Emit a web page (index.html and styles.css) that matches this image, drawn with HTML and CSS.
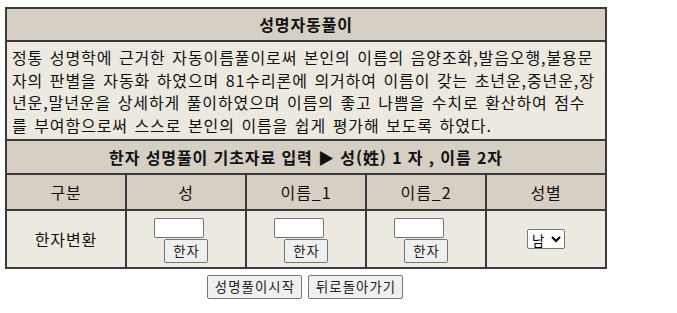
FILE: index.html
```html
<!DOCTYPE html>
<html lang="ko">
<head>
<meta charset="utf-8">
<title>성명자동풀이</title>
<link rel="stylesheet" href="styles.css">
</head>
<body>
<div class="page">
  <table class="name-table">
    <colgroup>
      <col class="col"><col class="col"><col class="col"><col class="col"><col class="col">
    </colgroup>
    <tr>
      <td class="title" colspan="5">성명자동풀이</td>
    </tr>
    <tr>
      <td class="desc" colspan="5">정통 성명학에 근거한 자동이름풀이로써 본인의 이름의 음양조화,발음오행,불용문<br>자의 판별을 자동화 하였으며 81수리론에 의거하여 이름이 갖는 초년운,중년운,장<br>년운,말년운을 상세하게 풀이하였으며 이름의 좋고 나쁨을 수치로 환산하여 점수<br>를 부여함으로써 스스로 본인의 이름을 쉽게 평가해 보도록 하였다.</td>
    </tr>
    <tr>
      <td class="subtitle" colspan="5">한자 성명풀이 기초자료 입력 ▶ 성(姓) 1 자 , 이름 2자</td>
    </tr>
    <tr>
      <td class="head">구분</td>
      <td class="head">성</td>
      <td class="head">이름_1</td>
      <td class="head">이름_2</td>
      <td class="head">성별</td>
    </tr>
    <tr>
      <td class="cell">한자변환</td>
      <td class="cell hanja-cell">
        <div class="hanja-group">
          <input class="hanja-input" type="text">
          <button class="btn hanja-btn" type="button">한자</button>
        </div>
      </td>
      <td class="cell hanja-cell">
        <div class="hanja-group">
          <input class="hanja-input" type="text">
          <button class="btn hanja-btn" type="button">한자</button>
        </div>
      </td>
      <td class="cell hanja-cell">
        <div class="hanja-group">
          <input class="hanja-input" type="text">
          <button class="btn hanja-btn" type="button">한자</button>
        </div>
      </td>
      <td class="cell">
        <select class="gender">
          <option>남</option>
          <option>여</option>
        </select>
      </td>
    </tr>
  </table>
  <div class="actions">
    <button class="btn action-btn" type="button">성명풀이시작</button>
    <button class="btn action-btn" type="button">뒤로돌아가기</button>
  </div>
</div>
</body>
</html>
```

FILE: styles.css
```css
html, body {
  background: #ffffff;
}

body {
  margin: 7px 0 0 5px;
  font-family: "Noto Sans CJK KR", "Noto Sans", sans-serif;
  color: #111111;
}

.page {
  width: 600px;
}

.name-table {
  width: 600px;
  table-layout: fixed;
  border-collapse: separate;
  border-spacing: 0;
  border: 1px solid #3a3a3a;
}

.col {
  width: 120px;
}

.name-table td {
  border: 1px solid #3a3a3a;
  font-size: 16px;
  letter-spacing: 0.9px;
  text-align: center;
  vertical-align: middle;
}

.title {
  background: #d5cfc4;
  font-weight: bold;
  line-height: 23px;
  padding: 4px 4px;
}

.desc {
  background: #ece9e1;
  text-align: left !important;
  line-height: 22.5px;
  padding: 4px 5px 3px 5px;
  white-space: nowrap;
  word-spacing: 1.2px;
}

.subtitle {
  background: #d5cfc4;
  font-weight: bold;
  line-height: 24px;
  padding: 4px 4px;
}

.head {
  background: #d5cfc4;
  line-height: 24px;
  padding: 5px 4px;
}

.cell {
  background: #ece9e1;
  padding: 0;
}

.hanja-cell {
  padding: 7px 0 4px 0 !important;
}

.hanja-group {
  display: flex;
  flex-direction: column;
  align-items: center;
}

.hanja-input {
  box-sizing: border-box;
  width: 50px;
  height: 20px;
  margin: 0 14px 1px 0;
  padding: 0 2px;
  border: 1px solid #767676;
  border-radius: 2px;
  background: #ffffff;
  font-family: inherit;
  font-size: 13px;
}

.btn {
  box-sizing: border-box;
  height: 24px;
  margin: 0;
  border: 1px solid #767676;
  border-radius: 2px;
  background: #efefef;
  color: #222222;
  font-family: "Noto Sans CJK KR", sans-serif;
  font-size: 13.33px;
  letter-spacing: 1.1px;
  line-height: 18px;
  padding: 2px 6px 2px 7px;
}

.hanja-btn {
  padding: 2px 7px 2px 8px;
}

.gender {
  box-sizing: border-box;
  width: 38px;
  height: 20px;
  font-family: "Noto Sans CJK KR", sans-serif;
  font-size: 13.33px;
  border: 1px solid #767676;
  border-radius: 2px;
  background: #ffffff;
  padding: 0;
}

.actions {
  display: flex;
  justify-content: center;
  gap: 6px;
  margin-top: 6px;
}
```
